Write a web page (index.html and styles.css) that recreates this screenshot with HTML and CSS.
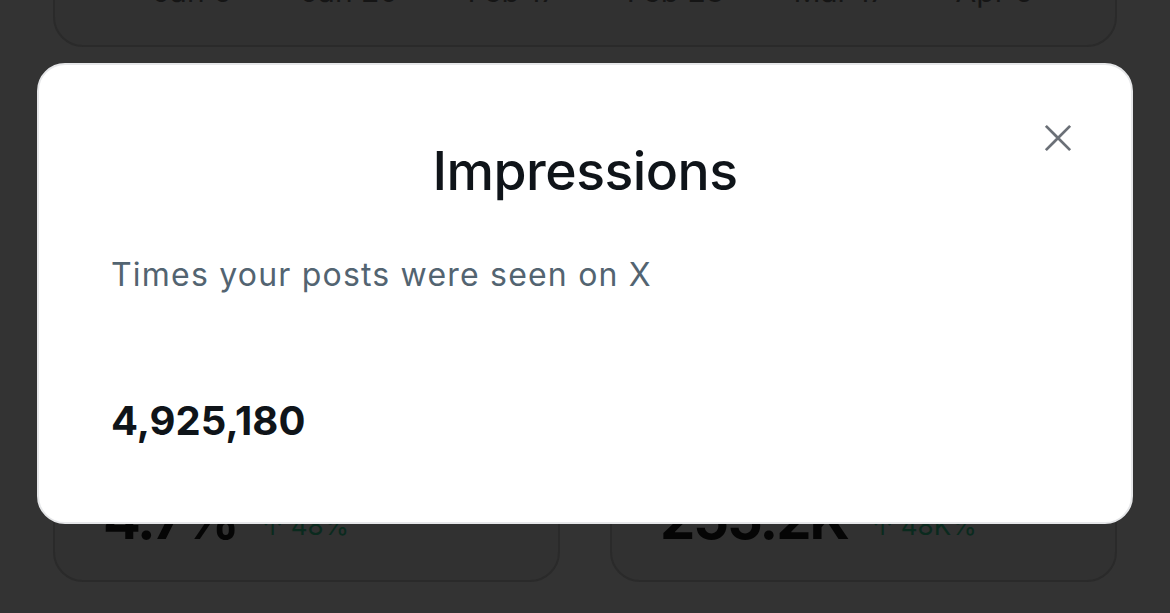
FILE: index.html
```html
<!DOCTYPE html>
<html lang="en">
<head>
<meta charset="utf-8">
<title>Impressions</title>
<link rel="stylesheet" href="styles.css">
</head>
<body>
<div class="page">
  <div class="card top-card">
    <div class="axis">
      <span>Jan 6</span><span>Jan 20</span><span>Feb 17</span><span>Feb 28</span><span>Mar 17</span><span>Apr 6</span>
    </div>
  </div>
  <div class="row">
    <div class="card stat-card">
      <span class="stat">4.7%</span><span class="delta">↑ 48%</span>
    </div>
    <div class="card stat-card">
      <span class="stat">255.2K</span><span class="delta">↑ 48K%</span>
    </div>
  </div>
</div>

<div class="modal">
  <button class="close" aria-label="Close">
    <svg viewBox="0 0 30 30" width="30" height="30"><path d="M2 2 L28 28 M28 2 L2 28" stroke="#6b7077" stroke-width="3" fill="none"/></svg>
  </button>
  <h1 class="title">Impressions</h1>
  <p class="sub">Times your posts were seen on X</p>
  <p class="value">4,925,180</p>
</div>
</body>
</html>
```
FILE: styles.css
```css
html, body {
  margin: 0;
  padding: 0;
  height: 100%;
  overflow: hidden;
  background: #333333;
  font-family: Inter, "Noto Sans", sans-serif;
}
.page {
  display: flex;
  flex-direction: column;
  padding: 0 53px;
  margin-top: -60px;
}
.card {
  box-sizing: border-box;
  border: 2px solid #2a2a2a;
  border-radius: 30px;
  background: #313131;
}
.top-card {
  height: 107px;
  display: flex;
  flex-direction: column;
  justify-content: flex-end;
  padding: 0 82px 40px 98px;
}
.axis {
  display: flex;
  justify-content: space-between;
  font-size: 30px;
  line-height: 28px;
  color: #151515;
}
.row {
  margin-top: 385px;
  display: flex;
  gap: 50px;
}
.stat-card {
  flex: 1;
  height: 150px;
  display: flex;
  align-items: flex-end;
  padding: 0 0 33px 48px;
  gap: 24px;
}
.stat {
  font-size: 56px;
  line-height: 56px;
  font-weight: 700;
  color: #050505;
  letter-spacing: -2px;
}
.delta {
  font-size: 26px;
  line-height: 42px;
  color: #0a2a1e;
}
.modal {
  position: fixed;
  left: 37px;
  top: 63px;
  width: 1096px;
  height: 461px;
  box-sizing: border-box;
  background: #ffffff;
  border: 2px solid #e6e7e9;
  border-radius: 28px;
  padding: 0 72px;
}
.close {
  position: absolute;
  right: 59px;
  top: 59px;
  width: 28px;
  height: 28px;
  padding: 0;
  border: 0;
  background: none;
}
.close svg { display: block; width: 28px; height: 28px; }
.title {
  margin: 66px 0 0;
  text-align: center;
  font-size: 53.5px;
  line-height: 80px;
  font-weight: 500;
  color: #0f1419;
  letter-spacing: -0.5px;
}
.sub {
  margin: 44px 0 0;
  font-size: 32px;
  line-height: 40px;
  letter-spacing: 1.2px;
  color: #536471;
}
.value {
  margin: 102px 0 0;
  font-size: 40px;
  line-height: 48px;
  font-weight: 700;
  color: #0f1419;
}
```
